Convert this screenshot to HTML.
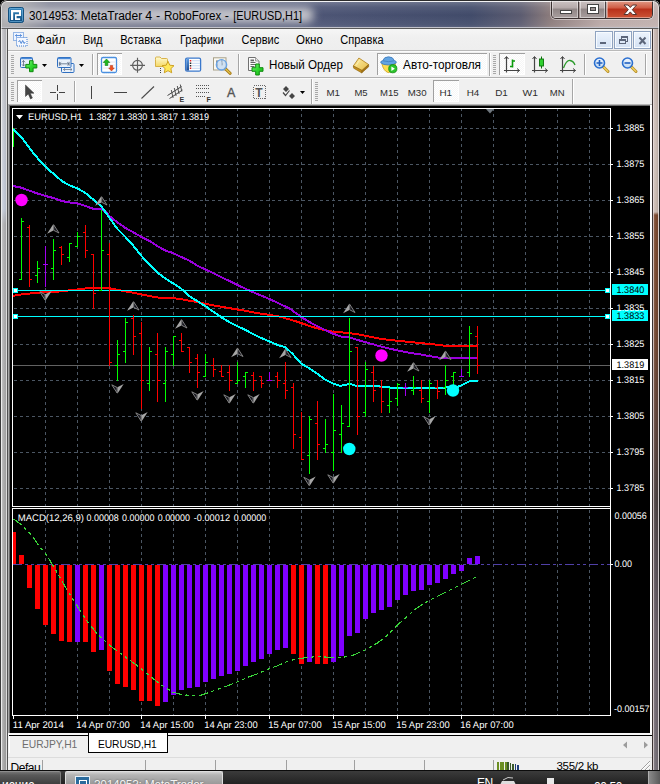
<!DOCTYPE html>
<html><head><meta charset="utf-8"><title>MetaTrader 4</title>
<style>
*{box-sizing:border-box;margin:0;padding:0}
html,body{width:660px;height:784px;overflow:hidden;background:#000;font-family:"Liberation Sans",sans-serif;}
.abs{position:absolute}
#frame{position:absolute;left:0;top:0;width:660px;height:771px;background:#c6c6c6;border-radius:7px 7px 0 0;overflow:hidden}
#frame:after{content:'';position:absolute;left:0;top:0;width:660px;height:40px;border-radius:7px 7px 0 0;box-shadow:inset 0 0 0 1px #2c2c2c,inset 0 0 0 2px rgba(255,255,255,.55);clip-path:inset(0 0 11px 0);pointer-events:none}
#title{position:absolute;left:28.500px;top:7px;font-size:12px;color:#000;white-space:nowrap;letter-spacing:-0.28px;text-shadow:0 0 5px #fff,0 0 8px #fff}
#client{position:absolute;left:8px;top:29px;width:644px;height:742px;background:#f0f0f0}
#menubar{position:absolute;left:0;top:0;width:644px;height:21px;background:linear-gradient(#f6f6f6,#f0f0f0 8px,#eeeeee)}
  .mi{position:absolute;top:5px;font-size:11px;letter-spacing:-0.1px;color:#000;white-space:nowrap}
.tb{position:absolute;left:0;width:644px;background:#f0f0f0}
.sep{position:absolute;width:1px;background:#a0a0a0}
.tf{position:absolute;top:7px;font-size:10px;color:#222;white-space:nowrap}
.chart{position:absolute;left:0;top:75px}
#tabs{position:absolute;left:0;top:704px;width:644px;height:24px;background:#f0f0f0}
#status{position:absolute;left:0;top:728px;width:644px;height:14px;background:#f0f0f0}
#taskbar{position:absolute;left:0;top:770px;width:660px;height:14px;background:linear-gradient(#3d3d3d,#222)}
</style></head><body>
<div id="frame">
<div class="abs" style="left:1px;top:1px;width:658px;height:28px;background:linear-gradient(90deg,#a6a6a8 0px,#9a9a9e 18px,#6c7086 48px,#4e5676 300px,#475070 380px,#414b6a 470px,#5c5c70 520px,#8c7c7c 550px,#b9a8a6 600px,#c0b0ae 658px)"></div>
<div class="abs" style="left:1px;top:1px;width:658px;height:28px;background:linear-gradient(180deg,rgba(255,255,255,.85) 0px,rgba(255,255,255,.85) 1px,rgba(255,255,255,.22) 1px,rgba(255,255,255,.08) 6px,rgba(255,255,255,0) 14px,rgba(255,255,255,.06) 24px,rgba(255,255,255,.12) 26px,#c2c2ca 26px,#c2c2ca 27px,#5e5e5e 27px,#5e5e5e 28px)"></div>
<div class="abs" style="left:2px;top:7px;width:312px;height:16px;border-radius:8px;background:rgba(200,200,206,.95);filter:blur(4px)"></div>
<!-- side strips -->
<div class="abs" style="left:0;top:29px;width:8px;height:742px;background:linear-gradient(180deg,#bcbcc0 0px,#c4c8d0 100px,#c2c9d6 180px,#b0b0b2 195px,#a9a9a9 470px,#a4a4a4 742px)"></div><div class="abs" style="left:0;top:29px;width:8px;height:742px;background:linear-gradient(90deg,#3c3c3c 0,#3c3c3c 1px,#ececec 1px,#ececec 2px,rgba(255,255,255,.25) 2px,rgba(255,255,255,0) 4px,rgba(0,0,0,.06) 6px,#dcdcdc 6px,#dcdcdc 7px,#505050 7px,#505050 8px)"></div>

<div class="abs" style="left:652px;top:29px;width:8px;height:742px;background:linear-gradient(180deg,#c6b6b0 0px,#cdbfb8 120px,#c9b9b0 183px,#7c4a30 186px,#744832 300px,#5e443c 400px,#4c4242 470px,#5a5258 540px,#6a6068 600px,#777078 742px)"></div>
<div class="abs" style="left:652px;top:29px;width:8px;height:742px;background:linear-gradient(90deg,#3a3232 0,#3a3232 1px,rgba(235,225,225,.75) 1px,rgba(235,225,225,.75) 2px,rgba(255,255,255,.1) 2px,rgba(255,255,255,0) 4px,rgba(0,0,0,.1) 6px,rgba(230,225,225,.85) 6px,rgba(230,225,225,.85) 7px,#222 7px,#222 8px)"></div>
<!-- client border -->
<div class="abs" style="left:7px;top:28px;width:646px;height:1px;background:#5a5a5a"></div>
<!-- app icon -->
<svg class="abs" style="left:8px;top:7px" width="16" height="16" viewBox="0 0 16 16"><defs><linearGradient id="ai" x1="0" y1="0" x2="0" y2="1"><stop offset="0" stop-color="#3b8cc2"/><stop offset="1" stop-color="#0f4a7c"/></linearGradient></defs><rect x=".5" y=".5" width="15" height="15" rx="1.800" fill="url(#ai)" stroke="#14507e"/><rect x="1.500" y="1.500" width="13" height="13" rx="1" fill="none" stroke="#6fb0dc" stroke-opacity=".7"/><path d="M3 3h10v6h-4.400v2.200h3.500v1.800H7V7.200h4V5.200H5.200v7.800H3z" fill="#fff"/></svg>
<!-- window buttons -->
<div class="abs" style="left:551px;top:0;width:102px;height:19px;border:1px solid #3a3030;border-top:none;border-radius:0 0 5px 5px;overflow:hidden;box-shadow:0 0 0 1px rgba(255,255,255,.45)">
<div class="abs" style="left:0;top:0;width:27px;height:18px;background:linear-gradient(#cfc6c6,#b4a9a9 45%,#8f8585 50%,#a89e9e);border-right:1px solid #4a4040;box-shadow:inset 0 0 0 1px rgba(255,255,255,.45)"></div>
<div class="abs" style="left:28px;top:0;width:26px;height:18px;background:linear-gradient(#cfc6c6,#b4a9a9 45%,#8f8585 50%,#a89e9e);border-right:1px solid #4a4040;box-shadow:inset 0 0 0 1px rgba(255,255,255,.45)"></div>
<div class="abs" style="left:55px;top:0;width:46px;height:18px;background:linear-gradient(#e3a390,#cf5a42 45%,#b8301a 50%,#cc5436);box-shadow:inset 0 0 0 1px rgba(255,255,255,.4)"></div>
<svg class="abs" style="left:0;top:0" width="100" height="18" viewBox="0 0 100 18"><rect x="8.500" y="10.500" width="11" height="3" fill="#fff" stroke="#454545"/><rect x="35.500" y="4.500" width="11" height="9" fill="#fff" stroke="#454545"/><rect x="38.500" y="7.500" width="5" height="3" fill="#9a9090" stroke="#454545"/><path d="M72 5h4l2.300 2.500 2.300-2.500h4l-4.300 4.700 4.300 4.800h-4l-2.300-2.600-2.300 2.600h-4l4.300-4.800z" fill="#fff" stroke="#54342e" stroke-width="1" stroke-linejoin="round"/></svg>
</div>

</div>
<div id="client">
<div id="menubar">
<svg class="abs" style="left:4px;top:2px" width="17" height="17" viewBox="12 31 17 17"><rect x="13.500" y="32.500" width="10" height="8" fill="#eef4ff" stroke="#3a78d0" stroke-dasharray="1 1"/><path d="M15.500 35.500h6M15.500 35.500l1.300-1.200M15.500 35.500l1.300 1.200M21.500 35.500l-1.300-1.200M21.500 35.500l-1.300 1.200" stroke="#3a78d0" stroke-width=".8" fill="none"/><rect x="16.500" y="37.500" width="10.500" height="8.500" fill="#f4f8ff" stroke="#3a78d0" stroke-dasharray="1 1"/><path d="M18.500 42l1.200-1.500 1.500 3 1.500-3 1.500 3 1-1.500" stroke="#3a78d0" stroke-width=".9" fill="none"/></svg>

<svg class="abs mdibtn" style="left:586px;top:1px" width="58" height="20" viewBox="594 30 58 20"><defs><linearGradient id="mb" x1="0" y1="0" x2="0" y2="1"><stop offset="0" stop-color="#edf4fd"/><stop offset="1" stop-color="#d3e1f3"/></linearGradient></defs>
<g shape-rendering="crispEdges"><rect x="595.500" y="31.500" width="17" height="17" fill="url(#mb)" stroke="#8fa3c0"/><rect x="614.500" y="31.500" width="17" height="17" fill="url(#mb)" stroke="#8fa3c0"/><rect x="633.500" y="31.500" width="17" height="17" fill="url(#mb)" stroke="#8fa3c0"/>
<rect x="596.500" y="32.500" width="15" height="15" fill="none" stroke="#f7fbff"/><rect x="615.500" y="32.500" width="15" height="15" fill="none" stroke="#f7fbff"/><rect x="634.500" y="32.500" width="15" height="15" fill="none" stroke="#f7fbff"/>
<rect x="600" y="42" width="6" height="2" fill="#5c667a"/>
<path d="M621.500 39V36.500H627.500V41.500H625.500" fill="none" stroke="#5c667a"/><path d="M621 37.500h7" stroke="#5c667a"/>
<rect x="619.500" y="39.500" width="6" height="4" fill="none" stroke="#5c667a"/><path d="M619 40.500h7" stroke="#5c667a"/></g>
<path d="M639.500 37.500l6 6.500M645.500 37.500l-6 6.500" stroke="#5c667a" stroke-width="2"/></svg>
</div>
<svg class="abs" style="left:0;top:21px" width="644" height="54" viewBox="8 50 644 54" font-family="Liberation Sans, sans-serif">
<defs>
<pattern id="dith" width="2" height="2" patternUnits="userSpaceOnUse"><rect width="2" height="2" fill="#f6f6f6"/><rect width="1" height="1" fill="#fff"/><rect x="1" y="1" width="1" height="1" fill="#fff"/></pattern>
<linearGradient id="gold" x1="0" y1="0" x2="1" y2="1"><stop offset="0" stop-color="#fff0a8"/><stop offset="1" stop-color="#e6bc48"/></linearGradient>
<linearGradient id="fold" x1="0" y1="0" x2="0" y2="1"><stop offset="0" stop-color="#fffbd4"/><stop offset="1" stop-color="#f5d864"/></linearGradient><linearGradient id="dwl" x1="0" y1="0" x2="0" y2="1"><stop offset="0" stop-color="#5a9ae0"/><stop offset="1" stop-color="#1c4c94"/></linearGradient><linearGradient id="plg" x1="0" y1="0" x2="1" y2="1"><stop offset="0" stop-color="#7cf67c"/><stop offset=".5" stop-color="#2fd82f"/><stop offset="1" stop-color="#16b016"/></linearGradient><linearGradient id="lens" x1="0" y1="0" x2="0" y2="1"><stop offset="0" stop-color="#f2f8ff" stop-opacity=".85"/><stop offset="1" stop-color="#b4d4f4" stop-opacity=".8"/></linearGradient>
<g id="grip" shape-rendering="crispEdges"><path d="M0 0.5h3M0 2.5h3M0 4.5h3M0 6.5h3M0 8.5h3M0 10.5h3M0 12.5h3M0 14.5h3M0 16.5h3M0 18.5h3" stroke="#a8a8a8" stroke-width="1"/></g>
<g id="plus"><path d="M-1.8 -5.5h3.6v3.7h3.7v3.6h-3.7v3.7h-3.6v-3.7h-3.7v-3.6h3.7z" fill="url(#plg)" stroke="#0f8a0f" stroke-width="1" stroke-linejoin="round"/></g>
<g id="dd"><path d="M0 0h5l-2.5 3z" fill="#000"/></g>
<g id="mag"><line x1="3.5" y1="3.5" x2="8.5" y2="8.5" stroke="#b8902a" stroke-width="3" stroke-linecap="round"/><line x1="4" y1="4" x2="8.3" y2="8.3" stroke="#f0d060" stroke-width="1.4" stroke-linecap="round"/><circle r="5" fill="url(#lens)" stroke="#2a6fd0" stroke-width="1.6"/></g>
</defs>
<rect x="8" y="50" width="644" height="56" fill="#f0f0f0"/>
<g shape-rendering="crispEdges">
<path d="M8 50.5H652" stroke="#b9b9b9"/><path d="M8 51.5H652" stroke="#fbfbfb"/>
<path d="M8 77.5H652" stroke="#b0b0b0"/><path d="M8 78.5H652" stroke="#fbfbfb"/>
<path d="M8 104.5H652" stroke="#fff"/><path d="M8 105.5H652" stroke="#696969"/>
<!-- separators -->
<g stroke="#a6a6a6"><path d="M92.5 54V75M238.5 54V75M489.5 53V76M584.5 54V75M645.5 54V75M74.5 81V102M311.5 79V104M572.5 79V104"/></g>
<g stroke="#fff"><path d="M93.5 54V75M239.5 54V75M490.5 53V76M585.5 54V75M646.5 54V75M75.5 81V102M312.5 79V104M573.5 79V104"/></g>
<!-- pressed buttons -->
<g>
<rect x="97" y="53" width="25" height="22" fill="url(#dith)"/><path d="M97.5 75V53.5H122" stroke="#a0a0a0" fill="none"/><path d="M121.5 54V74.5H98" stroke="#fff" fill="none"/>
<rect x="377" y="53" width="110" height="22" fill="url(#dith)"/><path d="M377.5 75V53.5H487" stroke="#a0a0a0" fill="none"/><path d="M486.5 54V74.5H378" stroke="#fff" fill="none"/>
<rect x="499" y="53" width="26" height="22" fill="url(#dith)"/><path d="M499.5 75V53.5H525" stroke="#a0a0a0" fill="none"/><path d="M524.5 54V74.5H500" stroke="#fff" fill="none"/>
<rect x="17" y="80" width="25" height="22" fill="url(#dith)"/><path d="M17.5 102V80.5H42" stroke="#a0a0a0" fill="none"/><path d="M41.5 81V101.5H18" stroke="#fff" fill="none"/>
<rect x="433" y="80" width="26" height="22" fill="url(#dith)"/><path d="M433.5 102V80.5H459" stroke="#a0a0a0" fill="none"/><path d="M458.5 81V101.5H434" stroke="#fff" fill="none"/>
</g>
</g>
<use href="#grip" x="11" y="55"/><use href="#grip" x="493" y="55"/><use href="#grip" x="11" y="82"/><use href="#grip" x="315" y="82"/>
<!-- icon: new chart -->
<g>
<rect x="20.500" y="57.500" width="12" height="10" rx="1" fill="#e9f1fb" stroke="#2f6fc0"/><path d="M21 58.500h11" stroke="#4a8ad8" stroke-width="1.400"/>
<path d="M23.500 60.500v5.500M22 62.300l1.500-1.800L25 62.300M22 64.300l1.500 1.800L25 64.300" stroke="#5a6a80" stroke-width=".8" fill="none"/>
<use href="#plus" x="31.300" y="66.200"/>
<use href="#dd" x="42" y="64"/>
</g>
<!-- icon: profiles / two windows -->
<g>
<rect x="61.500" y="63.500" width="12.500" height="9" rx="1" fill="#e9f1fb" stroke="#2f6fc0"/>
<path d="M63.500 69.500h8.500M63.500 69.500l1.600-1.400M63.500 69.500l1.600 1.400M72 69.500l-1.600-1.400M72 69.500l-1.600 1.400" stroke="#6a7a90" stroke-width=".8" fill="none"/>
<rect x="57.500" y="57.500" width="13.500" height="10" rx="1" fill="#e9f1fb" stroke="#2f6fc0"/><path d="M58 58.500h12.500" stroke="#4a8ad8" stroke-width="1.400"/>
<path d="M59.500 63.800h9.500M59.500 63.800l1.700-1.500M59.500 63.800l1.700 1.500M69 63.800l-1.700-1.500M69 63.800l-1.700 1.500M59.400 61.800v4M69.100 61.800v4" stroke="#5a6a80" stroke-width=".8" fill="none"/>
<use href="#dd" x="79" y="64"/>
</g>
<!-- icon: market watch (arrows) -->
<g>
<rect x="101.5" y="57.5" width="15" height="15" rx="1.500" fill="#fff" stroke="#4a90e0" stroke-width="1.3"/>
<path d="M103 62h12M103 65h12M103 68h12" stroke="#dde" stroke-width=".8"/>
<path d="M106.5 59l3.300 3.500h-2v3h-2.600v-3h-2z" fill="#1fb81f" stroke="#0a800a" stroke-width=".6"/>
<path d="M111.500 71l-2.800-3h1.600v-2.500h2.400v2.500h1.600z" fill="#f05020" stroke="#b03010" stroke-width=".5"/>
</g>
<!-- icon: crosshair target -->
<g stroke="#5e5e5e" fill="none" stroke-width="1.150"><circle cx="137.500" cy="65.300" r="4.900"/><path d="M137.500 57.800v15M130.200 65.300h14.800"/></g>
<!-- icon: folder + star -->
<g>
<path d="M155.500 59.500v-1.500q0-1 1-1h3.500l1.500 1.500h5q1 0 1 1v7h-12z" fill="url(#fold)" stroke="#d4ac3c" stroke-width=".9"/>
<path d="M160.500 68v1M160.500 70v1M160.500 72v1" stroke="#444" stroke-width="1"/>
<path d="M168 61.300l1.800 3.900 4.200.5-3.100 2.900.8 4.200-3.700-2.100-3.700 2.100.8-4.200-3.100-2.900 4.200-.5z" fill="#ffe85a" stroke="#c89a18" stroke-width=".9" stroke-linejoin="round"/>
</g>
<!-- icon: data window -->
<g>
<rect x="185.600" y="58.200" width="15" height="13" rx="1.500" fill="#fff" stroke="#3a78cc" stroke-width="1.300"/>
<rect x="186.300" y="58.900" width="2.700" height="11.600" fill="url(#dwl)"/>
<path d="M192 60.800h8M192 63.300h8M192 65.800h8M192 68.300h8" stroke="#bdd2f0" stroke-width=".9"/>
<path d="M189.800 60h1.500v1.500h-1.500zM189.800 67.500h1.500v1.500h-1.500z" fill="#e02020"/><path d="M189.800 62.500h1.500v1.500h-1.500zM189.800 65h1.500v1.500h-1.500z" fill="#222"/>
</g>
<!-- icon: chart + magnifier -->
<g>
<rect x="213.500" y="57.800" width="12.500" height="12.200" fill="#fbf9f2" stroke="#a8a088"/>
<path d="M217 60v7M216 62h1M217 65h1M222 59.500v6M221 61h1M222 64h1" stroke="#555" stroke-width=".8"/>
<g transform="translate(221.500,64.800)"><line x1="4" y1="4" x2="8.700" y2="8.500" stroke="#a87c18" stroke-width="3" stroke-linecap="round"/><line x1="4.300" y1="4.300" x2="8.500" y2="8.300" stroke="#e8c850" stroke-width="1.300" stroke-linecap="round"/><circle r="5.200" fill="#b4d2f2" fill-opacity=".62" stroke="#6aa4e6" stroke-width="1.300"/></g>
</g>
<!-- icon: new order -->
<g>
<path d="M248.500 57.500h7l3.500 3.500v9.500h-10.500z" fill="#fafafa" stroke="#707070"/><rect x="250.500" y="59.500" width="3.500" height="1.800" fill="#666"/><path d="M255.500 57.500v3.500h3.500" fill="#e4e4e4" stroke="#8a8a8a" stroke-width=".8"/>
<path d="M250.500 62.500h5M250.500 64.500h6M250.500 66.500h4" stroke="#555" stroke-width=".9"/>
<use href="#plus" x="257.500" y="69.500"/>
<text x="269" y="69.300" font-size="12px" fill="#000" textLength="74" lengthAdjust="spacingAndGlyphs">Новый Ордер</text>
</g>
<!-- icon: gold book -->
<g>
<path d="M353.300 66l5.600-8 9.700 6.500-6.600 6z" fill="url(#gold)" stroke="#b07c14" stroke-width=".8" stroke-linejoin="round"/>
<path d="M353.300 66l.4 2.200 8 4.700.3-2.400z" fill="#c8901c" stroke="#8a6410" stroke-width=".6" stroke-linejoin="round"/><path d="M361.700 72.900l7-6.200-.1-2.200-6.600 6z" fill="#a87414" stroke="#8a6410" stroke-width=".6" stroke-linejoin="round"/>
<path d="M356 65.500l3.500-5" stroke="#fff6c0" stroke-width="1" stroke-opacity=".7"/>
</g>
<!-- icon: autotrading -->
<g>
<path d="M381.800 63.500h13.800l-1.600 5.500q-2.500 4-6 3.500q-4.500-1.500-6.200-9z" fill="#ffdc50" stroke="#c8a020" stroke-width=".8" stroke-linejoin="round"/>
<path d="M380.800 62.800q-.8-1.300 2-2.200q1.200-3.800 5.700-3.800t5.700 3.600q2.800 1 2 2.400q-2 2.200-7.700 2.200t-7.700-2.200z" fill="#62a4e2" stroke="#3a78bc" stroke-width=".8"/>
<path d="M383 60.800q5.500 1.800 11.200 0" stroke="#3a78bc" stroke-width=".7" fill="none"/>
<circle cx="392.800" cy="68.700" r="4.100" fill="#2cc42c" stroke="#0f8a0f" stroke-width=".8"/><path d="M391.400 66.400l3.500 2.300-3.500 2.300z" fill="#fff"/>
<text x="403" y="69.300" font-size="12px" fill="#000" textLength="78" lengthAdjust="spacingAndGlyphs">Авто-торговля</text>
</g>
<!-- chart-type icons -->
<g fill="none">
<path d="M506.500 57v15.500M504 70.500h15.500" stroke="#444" stroke-width="1.200"/><path d="M504.500 59l2-2.500 2 2.500M517 68.500l2.500 2-2.500 2" stroke="#444" stroke-width="1"/>
<path d="M512.500 59.500v8M510 66.500h2.500M512.500 61h2.500" stroke="#0a9a0a" stroke-width="1.600"/>
<path d="M534.500 57v15.500M532 70.500h15.500" stroke="#444" stroke-width="1.200"/><path d="M532.500 59l2-2.500 2 2.500M545 68.500l2.500 2-2.500 2" stroke="#444" stroke-width="1"/>
<path d="M541.500 56.500v12" stroke="#0a700a" stroke-width="1"/><rect x="539.500" y="59" width="4" height="7" fill="#30d030" stroke="#0a700a" stroke-width=".9"/>
<path d="M562.500 57v15.500M560 70.500h15.500" stroke="#444" stroke-width="1.200"/><path d="M560.500 59l2-2.500 2 2.500M573 68.500l2.500 2-2.500 2" stroke="#444" stroke-width="1"/>
<path d="M563.500 68q3-8 6.500-7.500t5 4.500" stroke="#2a9a2a" stroke-width="1.300"/>
</g>
<!-- zoom icons -->
<g transform="translate(599.500,63)"><use href="#mag"/><path d="M-3 0h6M0 -3v6" stroke="#2060c0" stroke-width="1.600"/></g>
<g transform="translate(627.500,63)"><use href="#mag"/><path d="M-3 0h6" stroke="#2060c0" stroke-width="1.600"/></g>
<!-- toolbar 2 -->
<path d="M25.500 85v11.500l2.800-2.600 2.200 5 1.900-.9-2.200-4.800h3.800z" fill="#444" stroke="#333" stroke-width=".5" stroke-linejoin="round"/>
<g stroke="#444" stroke-width="1.200" shape-rendering="crispEdges"><path d="M57.500 85v6M57.500 94v6M50 92.500h6M59 92.500h6"/><path d="M91.500 86v13"/><path d="M114 92.500h13"/></g>
<path d="M141.500 98.500l12.500-12" stroke="#4a4a4a" stroke-width="1.050"/>
<!-- channel E -->
<g stroke="#444" stroke-width="1" fill="none"><path d="M167.500 95.500l14-9M169.500 98.500l13-8.500"/><path d="M171.300 90l1.800 8M174.300 88l1.800 8M177.300 86l1.800 8M180.300 84.500l1.500 7" stroke-width=".9"/></g>
<text x="179.500" y="101.500" font-size="7px" font-weight="bold" fill="#333">E</text>
<!-- fibo F -->
<g stroke="#555" stroke-width="1" stroke-dasharray="1 1" shape-rendering="crispEdges"><path d="M196 85.500h14M196 88.500h14M196 92.500h14M196 96.500h10"/></g>
<text x="206.500" y="101.500" font-size="7px" font-weight="bold" fill="#333">F</text>
<text x="227" y="96.800" font-size="12.500px" fill="#555" stroke="#555" stroke-width=".35">A</text>
<rect x="253.500" y="85.500" width="12" height="13" fill="none" stroke="#666" stroke-dasharray="1 1" shape-rendering="crispEdges"/>
<text x="255.300" y="97" font-size="12px" font-weight="bold" fill="#555">T</text>
<g fill="#444"><path d="M283 89l3-3 3 3-3 3zM289 96l3-3 3 3-3 3z"/><path d="M283 92.500l2.500 3 4-5" stroke="#444" stroke-width="1.200" fill="none"/></g>
<use href="#dd" x="300" y="91"/>
<g font-size="9.200px" fill="#2e2e2e"><text x="326.4" y="95.600" textLength="13.5" lengthAdjust="spacingAndGlyphs">M1</text><text x="354.4" y="95.600" textLength="13.2" lengthAdjust="spacingAndGlyphs">M5</text><text x="380.1" y="95.600" textLength="18.5" lengthAdjust="spacingAndGlyphs">M15</text><text x="407.8" y="95.600" textLength="18.8" lengthAdjust="spacingAndGlyphs">M30</text><text x="439.4" y="95.600" textLength="12.7" lengthAdjust="spacingAndGlyphs">H1</text><text x="466.7" y="95.600" textLength="12.6" lengthAdjust="spacingAndGlyphs">H4</text><text x="495.2" y="95.600" textLength="12.7" lengthAdjust="spacingAndGlyphs">D1</text><text x="522.4" y="95.600" textLength="15.5" lengthAdjust="spacingAndGlyphs">W1</text><text x="549.8" y="95.600" textLength="14.8" lengthAdjust="spacingAndGlyphs">MN</text></g>
</svg>

<svg class="chart" width="644" height="629" viewBox="8 104 644 629" shape-rendering="crispEdges">
<rect x="8" y="104" width="644" height="629" fill="#000"/>
<rect x="8" y="104" width="644" height="1" fill="#b8b8b8"/><rect x="8" y="105" width="644" height="1" fill="#6c6c6c"/>
<rect x="8" y="104" width="1" height="629" fill="#a8a8a8"/><rect x="9" y="105" width="1" height="628" fill="#6c6c6c"/>
<rect x="650" y="105" width="2" height="628" fill="#fff"/>
<g stroke="#4b5663" stroke-width="1" stroke-dasharray="3 3" fill="none">
<path d="M45.5 108V506"/>
<path d="M45.5 510V715"/>
<path d="M77.5 108V506"/>
<path d="M77.5 510V715"/>
<path d="M109.5 108V506"/>
<path d="M109.5 510V715"/>
<path d="M141.5 108V506"/>
<path d="M141.5 510V715"/>
<path d="M173.5 108V506"/>
<path d="M173.5 510V715"/>
<path d="M205.5 108V506"/>
<path d="M205.5 510V715"/>
<path d="M237.5 108V506"/>
<path d="M237.5 510V715"/>
<path d="M269.5 108V506"/>
<path d="M269.5 510V715"/>
<path d="M301.5 108V506"/>
<path d="M301.5 510V715"/>
<path d="M333.5 108V506"/>
<path d="M333.5 510V715"/>
<path d="M365.5 108V506"/>
<path d="M365.5 510V715"/>
<path d="M397.5 108V506"/>
<path d="M397.5 510V715"/>
<path d="M429.5 108V506"/>
<path d="M429.5 510V715"/>
<path d="M461.5 108V506"/>
<path d="M461.5 510V715"/>
<path d="M493.5 108V506"/>
<path d="M493.5 510V715"/>
<path d="M525.5 108V506"/>
<path d="M525.5 510V715"/>
<path d="M557.5 108V506"/>
<path d="M557.5 510V715"/>
<path d="M589.5 108V506"/>
<path d="M589.5 510V715"/>
<path d="M14 128.5H610"/>
<path d="M14 164.5H610"/>
<path d="M14 200.5H610"/>
<path d="M14 236.5H610"/>
<path d="M14 272.5H610"/>
<path d="M14 308.5H610"/>
<path d="M14 344.5H610"/>
<path d="M14 380.5H610"/>
<path d="M14 416.5H610"/>
<path d="M14 452.5H610"/>
<path d="M14 488.5H610"/>
</g>
<path d="M13 365.5H610" stroke="#626262" stroke-width="1"/>
<g stroke="#fff" stroke-width="1" fill="none">
<path d="M12.5 108V507M12 108.5H611M610.5 108V716M12 506.5H611"/>
<path d="M12 508.5H611M12.5 508V716M12 715.5H611"/>
</g>
<g stroke="#fff" stroke-width="1">
<path d="M610 128.5H613"/>
<path d="M610 164.5H613"/>
<path d="M610 200.5H613"/>
<path d="M610 236.5H613"/>
<path d="M610 272.5H613"/>
<path d="M610 308.5H613"/>
<path d="M610 344.5H613"/>
<path d="M610 380.5H613"/>
<path d="M610 416.5H613"/>
<path d="M610 452.5H613"/>
<path d="M610 488.5H613"/>
<path d="M610 564.5H613"/>
<path d="M13.5 716V719"/>
<path d="M77.5 716V719"/>
<path d="M141.5 716V719"/>
<path d="M205.5 716V719"/>
<path d="M269.5 716V719"/>
<path d="M333.5 716V719"/>
<path d="M397.5 716V719"/>
<path d="M461.5 716V719"/>
</g>
<path d="M13.5 128V147" stroke="#00ff00" stroke-width="1"/>
<path d="M486 109h8l-4 4.500z" fill="#70787f" shape-rendering="auto"/>
<g fill="none" stroke-width="2" shape-rendering="crispEdges" stroke-linejoin="round">
<polyline points="13,295.75 23,294.25 33,293.25 45.5,292 58,291.6 70.5,290.2 83,288.8 93,287.5 108,288 118,290 128,291.75 138,293.75 148,295.75 158,297.5 173.75,298.25 181.25,299.25 189.5,300.75 197.5,302 205.5,303.75 213.75,305.5 221.75,306.75 230,308.25 237.5,309.5 245.5,310.75 253.75,312.5 261.75,313.75 270,315 278,316.25 290,319.5 301.25,323 312.5,327 322.5,329.5 333.25,331.75 342.5,332.5 349.5,333.25 357.5,334.25 365,335.75 380,338.75 390,340 405,341.5 420,343 435,344.5 446.5,346 477.5,346" stroke="#ff0000"/>
<polyline points="13,186 20.5,187.5 29,190.5 37.5,193.5 45.5,196 53.5,198 61.75,201 69.75,202.5 77.5,203.5 85.5,206 93.75,209 101.75,209 105.5,211.75 109.5,216 117.5,222.5 125.5,228 133.75,232.6 141.75,237.2 150,241.3 157.5,246.2 165.75,250.75 173.75,253.25 181.25,257 189.5,260.75 197.5,265.75 205.5,269.5 213.75,273.25 221.75,277.5 230,281.25 237.5,285 245.5,288.75 253.75,292.5 261.75,295.75 270,299.25 278,303 290,308.75 301.25,317 312.5,323.75 322.5,328.75 333.25,333.75 342.5,337 349.5,337.5 357.5,340 365,342 380,346.25 390,348.75 405,352 420,354.4 435,357 442,358.2 477.5,358.2" stroke="#9a00dc"/>
<polyline points="13.3,128.8 18,134.3 23.6,140 28,146 32.7,152.2 39,159.8 45.5,166.8 50.5,171.3 55.5,175.4 61.75,181 69.75,185.5 77.5,188.5 85.5,193 93.75,200 101.75,206.75 109.5,218 117.5,229 125,236.5 133.75,246.25 141.75,256.25 150,265 157.5,272.5 165.75,278.75 173.75,283.75 181.25,288.75 189.5,296.25 197.5,301.25 205.5,306.25 213.75,312 221.75,317.5 230,322.5 237.5,326.25 245.5,330 253.75,334.5 261.75,338.25 270,341.75 278,345.2 285,347 292.5,353.75 301.25,363.75 310,368.75 317.5,373.75 325,379.5 333.25,383.75 340,385.75 345.5,385 349.5,383.75 353.75,385 357.5,386.25 365,386.25 380,386.5 390,387.5 405,387.5 420,387.5 445,387.5 457,387.3 463.4,384.3 469.5,381.2 478.5,381" stroke="#00ffff"/>
</g>
<path d="M13 290.5H610M13 316.5H610" stroke="#00ffff" stroke-width="1"/>
<path d="M21.5 218V280M19 279.5H21M22 221.5H24" stroke="#00ff00" stroke-width="1" fill="none"/>
<path d="M29.5 225V287M27 227.5H29M30 279.5H32" stroke="#ff0000" stroke-width="1" fill="none"/>
<path d="M37.5 261V283M35 275.5H37M38 268.5H40" stroke="#00ff00" stroke-width="1" fill="none"/>
<path d="M45.5 246V287M43 264.5H45M46 264.5H48" stroke="#a000f0" stroke-width="1" fill="none"/>
<path d="M53.5 239V280M51 268.5H53M54 250.5H56" stroke="#00ff00" stroke-width="1" fill="none"/>
<path d="M61.5 246V265M59 247.5H61M62 254.5H64" stroke="#ff0000" stroke-width="1" fill="none"/>
<path d="M69.5 243V262M67 257.5H69M70 243.5H72" stroke="#00ff00" stroke-width="1" fill="none"/>
<path d="M77.5 232V247M75 246.5H77M78 236.5H80" stroke="#00ff00" stroke-width="1" fill="none"/>
<path d="M85.5 225V258M83 232.5H85M86 250.5H88" stroke="#ff0000" stroke-width="1" fill="none"/>
<path d="M93.5 254V309M91 254.5H93M94 293.5H96" stroke="#ff0000" stroke-width="1" fill="none"/>
<path d="M101.5 210V291M99 290.5H101M102 250.5H104" stroke="#00ff00" stroke-width="1" fill="none"/>
<path d="M109.5 243V366M107 254.5H109M110 362.5H112" stroke="#ff0000" stroke-width="1" fill="none"/>
<path d="M117.5 340V381M115 365.5H117M118 354.5H120" stroke="#00ff00" stroke-width="1" fill="none"/>
<path d="M125.5 318V363M123 351.5H125M126 322.5H128" stroke="#00ff00" stroke-width="1" fill="none"/>
<path d="M133.5 315V355M131 318.5H133M134 336.5H136" stroke="#ff0000" stroke-width="1" fill="none"/>
<path d="M141.5 322V409M139 333.5H141M142 380.5H144" stroke="#ff0000" stroke-width="1" fill="none"/>
<path d="M149.5 347V391M147 383.5H149M150 351.5H152" stroke="#00ff00" stroke-width="1" fill="none"/>
<path d="M157.5 333V402M155 354.5H157M158 380.5H160" stroke="#ff0000" stroke-width="1" fill="none"/>
<path d="M165.5 347V402M163 383.5H165M166 351.5H168" stroke="#00ff00" stroke-width="1" fill="none"/>
<path d="M173.5 336V366M171 354.5H173M174 336.5H176" stroke="#00ff00" stroke-width="1" fill="none"/>
<path d="M181.5 333V352M179 340.5H181M182 351.5H184" stroke="#ff0000" stroke-width="1" fill="none"/>
<path d="M189.5 347V373M187 347.5H189M190 362.5H192" stroke="#ff0000" stroke-width="1" fill="none"/>
<path d="M197.5 354V388M195 358.5H197M198 372.5H200" stroke="#ff0000" stroke-width="1" fill="none"/>
<path d="M205.5 354V377M203 376.5H205M206 362.5H208" stroke="#00ff00" stroke-width="1" fill="none"/>
<path d="M213.5 358V377M211 365.5H213M214 369.5H216" stroke="#ff0000" stroke-width="1" fill="none"/>
<path d="M221.5 365V377M219 371.5H221M222 376.5H224" stroke="#ff0000" stroke-width="1" fill="none"/>
<path d="M229.5 365V391M227 372.5H229M230 380.5H232" stroke="#ff0000" stroke-width="1" fill="none"/>
<path d="M237.5 362V384M235 383.5H237M238 380.5H240" stroke="#00ff00" stroke-width="1" fill="none"/>
<path d="M245.5 372V388M243 376.5H245M246 372.5H248" stroke="#00ff00" stroke-width="1" fill="none"/>
<path d="M253.5 372V391M251 375.5H253M254 380.5H256" stroke="#ff0000" stroke-width="1" fill="none"/>
<path d="M261.5 376V388M259 376.5H261M262 383.5H264" stroke="#ff0000" stroke-width="1" fill="none"/>
<path d="M269.5 372V381M267 380.5H269M270 380.5H272" stroke="#a000f0" stroke-width="1" fill="none"/>
<path d="M277.5 372V388M275 376.5H277M278 380.5H280" stroke="#ff0000" stroke-width="1" fill="none"/>
<path d="M285.5 362V399M283 383.5H285M286 390.5H288" stroke="#ff0000" stroke-width="1" fill="none"/>
<path d="M293.5 383V449M291 387.5H293M294 434.5H296" stroke="#ff0000" stroke-width="1" fill="none"/>
<path d="M301.5 412V460M299 437.5H301M302 459.5H304" stroke="#ff0000" stroke-width="1" fill="none"/>
<path d="M309.5 416V474M307 455.5H309M310 419.5H312" stroke="#00ff00" stroke-width="1" fill="none"/>
<path d="M317.5 401V460M315 423.5H317M318 444.5H320" stroke="#ff0000" stroke-width="1" fill="none"/>
<path d="M325.5 419V453M323 448.5H325M326 444.5H328" stroke="#00ff00" stroke-width="1" fill="none"/>
<path d="M333.5 394V471M331 452.5H333M334 430.5H336" stroke="#00ff00" stroke-width="1" fill="none"/>
<path d="M341.5 405V453M339 434.5H341M342 423.5H344" stroke="#00ff00" stroke-width="1" fill="none"/>
<path d="M349.5 318V427M347 426.5H349M350 351.5H352" stroke="#00ff00" stroke-width="1" fill="none"/>
<path d="M357.5 347V435M355 347.5H357M358 416.5H360" stroke="#ff0000" stroke-width="1" fill="none"/>
<path d="M365.5 362V417M363 412.5H365M366 369.5H368" stroke="#00ff00" stroke-width="1" fill="none"/>
<path d="M373.5 366V402M371 372.5H373M374 390.5H376" stroke="#ff0000" stroke-width="1" fill="none"/>
<path d="M381.5 380V413M379 387.5H381M382 401.5H384" stroke="#ff0000" stroke-width="1" fill="none"/>
<path d="M389.5 388V413M387 405.5H389M390 401.5H392" stroke="#00ff00" stroke-width="1" fill="none"/>
<path d="M397.5 383V406M395 398.5H397M398 384.5H400" stroke="#00ff00" stroke-width="1" fill="none"/>
<path d="M405.5 383V396M403 387.5H405M406 387.5H408" stroke="#a000f0" stroke-width="1" fill="none"/>
<path d="M413.5 376V395M411 390.5H413M414 387.5H416" stroke="#00ff00" stroke-width="1" fill="none"/>
<path d="M421.5 380V403M419 390.5H421M422 398.5H424" stroke="#ff0000" stroke-width="1" fill="none"/>
<path d="M429.5 380V413M427 401.5H429M430 383.5H432" stroke="#00ff00" stroke-width="1" fill="none"/>
<path d="M437.5 380V399M435 387.5H437M438 391.5H440" stroke="#ff0000" stroke-width="1" fill="none"/>
<path d="M445.5 365V395M443 387.5H445M446 380.5H448" stroke="#00ff00" stroke-width="1" fill="none"/>
<path d="M453.5 372V385M451 376.5H453M454 372.5H456" stroke="#00ff00" stroke-width="1" fill="none"/>
<path d="M461.5 369V377M459 376.5H461M462 376.5H464" stroke="#a000f0" stroke-width="1" fill="none"/>
<path d="M469.5 326V377M467 372.5H469M470 333.5H472" stroke="#00ff00" stroke-width="1" fill="none"/>
<path d="M477.5 326V374M475 336.5H477M478 365.5H480" stroke="#ff0000" stroke-width="1" fill="none"/>
<g shape-rendering="auto">
<path d="M101.4 196L95.10000000000001 205.8L101.4 202.6Z" fill="#a6a6a6"/><path d="M101.7 196.8L107.0 205L101.7 202.3Z" fill="#14141c" stroke="#8c8c8c" stroke-width="0.9"/>
<path d="M53.4 224L47.1 233.8L53.4 230.6Z" fill="#a6a6a6"/><path d="M53.699999999999996 224.8L59.0 233L53.699999999999996 230.3Z" fill="#14141c" stroke="#8c8c8c" stroke-width="0.9"/>
<path d="M45.4 300.8L51.699999999999996 291L45.4 294.2Z" fill="#a6a6a6"/><path d="M45.1 300L39.8 291.8L45.1 294.5Z" fill="#14141c" stroke="#8c8c8c" stroke-width="0.9"/>
<path d="M133.4 301L127.10000000000001 310.8L133.4 307.6Z" fill="#a6a6a6"/><path d="M133.70000000000002 301.8L139.0 310L133.70000000000002 307.3Z" fill="#14141c" stroke="#8c8c8c" stroke-width="0.9"/>
<path d="M117.4 393.8L123.7 384L117.4 387.2Z" fill="#a6a6a6"/><path d="M117.10000000000001 393L111.80000000000001 384.8L117.10000000000001 387.5Z" fill="#14141c" stroke="#8c8c8c" stroke-width="0.9"/>
<path d="M141.4 421.8L147.70000000000002 412L141.4 415.2Z" fill="#a6a6a6"/><path d="M141.1 421L135.8 412.8L141.1 415.5Z" fill="#14141c" stroke="#8c8c8c" stroke-width="0.9"/>
<path d="M181.4 319L175.1 328.8L181.4 325.6Z" fill="#a6a6a6"/><path d="M181.70000000000002 319.8L187.0 328L181.70000000000002 325.3Z" fill="#14141c" stroke="#8c8c8c" stroke-width="0.9"/>
<path d="M197.4 400.8L203.70000000000002 391L197.4 394.2Z" fill="#a6a6a6"/><path d="M197.1 400L191.8 391.8L197.1 394.5Z" fill="#14141c" stroke="#8c8c8c" stroke-width="0.9"/>
<path d="M237.4 347.5L231.1 357.3L237.4 354.1Z" fill="#a6a6a6"/><path d="M237.70000000000002 348.3L243.0 356.5L237.70000000000002 353.8Z" fill="#14141c" stroke="#8c8c8c" stroke-width="0.9"/>
<path d="M229.4 403.8L235.70000000000002 394L229.4 397.2Z" fill="#a6a6a6"/><path d="M229.1 403L223.8 394.8L229.1 397.5Z" fill="#14141c" stroke="#8c8c8c" stroke-width="0.9"/>
<path d="M253.4 403.8L259.7 394L253.4 397.2Z" fill="#a6a6a6"/><path d="M253.1 403L247.8 394.8L253.1 397.5Z" fill="#14141c" stroke="#8c8c8c" stroke-width="0.9"/>
<path d="M285.4 348.5L279.09999999999997 358.3L285.4 355.1Z" fill="#a6a6a6"/><path d="M285.7 349.3L291.0 357.5L285.7 354.8Z" fill="#14141c" stroke="#8c8c8c" stroke-width="0.9"/>
<path d="M349.4 303.5L343.09999999999997 313.3L349.4 310.1Z" fill="#a6a6a6"/><path d="M349.7 304.3L355.0 312.5L349.7 309.8Z" fill="#14141c" stroke="#8c8c8c" stroke-width="0.9"/>
<path d="M309.4 486.3L315.7 476.5L309.4 479.7Z" fill="#a6a6a6"/><path d="M309.09999999999997 485.5L303.79999999999995 477.3L309.09999999999997 480.0Z" fill="#14141c" stroke="#8c8c8c" stroke-width="0.9"/>
<path d="M333.4 483.8L339.7 474L333.4 477.2Z" fill="#a6a6a6"/><path d="M333.09999999999997 483L327.79999999999995 474.8L333.09999999999997 477.5Z" fill="#14141c" stroke="#8c8c8c" stroke-width="0.9"/>
<path d="M413.4 362L407.09999999999997 371.8L413.4 368.6Z" fill="#a6a6a6"/><path d="M413.7 362.8L419.0 371L413.7 368.3Z" fill="#14141c" stroke="#8c8c8c" stroke-width="0.9"/>
<path d="M445.4 350.5L439.09999999999997 360.3L445.4 357.1Z" fill="#a6a6a6"/><path d="M445.7 351.3L451.0 359.5L445.7 356.8Z" fill="#14141c" stroke="#8c8c8c" stroke-width="0.9"/>
<path d="M429.4 425.8L435.7 416L429.4 419.2Z" fill="#a6a6a6"/><path d="M429.09999999999997 425L423.79999999999995 416.8L429.09999999999997 419.5Z" fill="#14141c" stroke="#8c8c8c" stroke-width="0.9"/>
<circle cx="21.5" cy="200" r="6.2" fill="#ff00ff"/><circle cx="381.5" cy="355.5" r="6.2" fill="#ff00ff"/>
<circle cx="349.3" cy="449" r="6.2" fill="#00ffff"/><circle cx="453" cy="390.5" r="6.2" fill="#00ffff"/>
</g>
<rect x="13" y="288" width="5" height="5" fill="#00ffff"/><rect x="14" y="289" width="3" height="3" fill="#fff"/>
<rect x="605" y="288" width="5" height="5" fill="#00ffff"/><rect x="606" y="289" width="3" height="3" fill="#fff"/>
<rect x="13" y="314" width="5" height="5" fill="#00ffff"/><rect x="14" y="315" width="3" height="3" fill="#fff"/>
<rect x="605" y="314" width="5" height="5" fill="#00ffff"/><rect x="606" y="315" width="3" height="3" fill="#fff"/>
<rect x="612" y="284" width="36" height="11" fill="#00ffff"/>
<rect x="612" y="310" width="36" height="11" fill="#00ffff"/>
<rect x="612" y="359" width="36" height="11" fill="#fff"/>
<path d="M13 564.5H610" stroke="#5040a8" stroke-width="1" stroke-dasharray="9 3 3 3 3 3"/>
<rect x="13" y="532" width="3" height="32" fill="#ff0000"/>
<rect x="19" y="555" width="5" height="9" fill="#ff0000"/>
<rect x="27" y="565" width="5" height="23" fill="#ff0000"/>
<rect x="35" y="565" width="5" height="44" fill="#ff0000"/>
<rect x="43" y="565" width="5" height="60" fill="#ff0000"/>
<rect x="51" y="565" width="5" height="69" fill="#ff0000"/>
<rect x="59" y="565" width="5" height="76" fill="#ff0000"/>
<rect x="67" y="565" width="5" height="77" fill="#ff0000"/>
<rect x="75" y="565" width="5" height="77" fill="#8000ff"/>
<rect x="83" y="565" width="5" height="77" fill="#ff0000"/>
<rect x="91" y="565" width="5" height="87" fill="#ff0000"/>
<rect x="99" y="565" width="5" height="85" fill="#8000ff"/>
<rect x="107" y="565" width="5" height="106" fill="#ff0000"/>
<rect x="115" y="565" width="5" height="119" fill="#ff0000"/>
<rect x="123" y="565" width="5" height="122" fill="#ff0000"/>
<rect x="131" y="565" width="5" height="125" fill="#ff0000"/>
<rect x="139" y="565" width="5" height="136" fill="#ff0000"/>
<rect x="147" y="565" width="5" height="136" fill="#ff0000"/>
<rect x="155" y="565" width="5" height="141" fill="#ff0000"/>
<rect x="163" y="565" width="5" height="137" fill="#8000ff"/>
<rect x="171" y="565" width="5" height="130" fill="#8000ff"/>
<rect x="179" y="565" width="5" height="125" fill="#8000ff"/>
<rect x="187" y="565" width="5" height="123" fill="#8000ff"/>
<rect x="195" y="565" width="5" height="122" fill="#8000ff"/>
<rect x="203" y="565" width="5" height="117" fill="#8000ff"/>
<rect x="211" y="565" width="5" height="114" fill="#8000ff"/>
<rect x="219" y="565" width="5" height="111" fill="#8000ff"/>
<rect x="227" y="565" width="5" height="109" fill="#8000ff"/>
<rect x="235" y="565" width="5" height="106" fill="#8000ff"/>
<rect x="243" y="565" width="5" height="101" fill="#8000ff"/>
<rect x="251" y="565" width="5" height="97" fill="#8000ff"/>
<rect x="259" y="565" width="5" height="94" fill="#8000ff"/>
<rect x="267" y="565" width="5" height="89" fill="#8000ff"/>
<rect x="275" y="565" width="5" height="85" fill="#8000ff"/>
<rect x="283" y="565" width="5" height="83" fill="#8000ff"/>
<rect x="291" y="565" width="5" height="89" fill="#ff0000"/>
<rect x="299" y="565" width="5" height="99" fill="#ff0000"/>
<rect x="307" y="565" width="5" height="97" fill="#8000ff"/>
<rect x="315" y="565" width="5" height="99" fill="#ff0000"/>
<rect x="323" y="565" width="5" height="99" fill="#ff0000"/>
<rect x="331" y="565" width="5" height="97" fill="#8000ff"/>
<rect x="339" y="565" width="5" height="91" fill="#8000ff"/>
<rect x="347" y="565" width="5" height="71" fill="#8000ff"/>
<rect x="355" y="565" width="5" height="68" fill="#8000ff"/>
<rect x="363" y="565" width="5" height="54" fill="#8000ff"/>
<rect x="371" y="565" width="5" height="48" fill="#8000ff"/>
<rect x="379" y="565" width="5" height="45" fill="#8000ff"/>
<rect x="387" y="565" width="5" height="42" fill="#8000ff"/>
<rect x="395" y="565" width="5" height="35" fill="#8000ff"/>
<rect x="403" y="565" width="5" height="30" fill="#8000ff"/>
<rect x="411" y="565" width="5" height="26" fill="#8000ff"/>
<rect x="419" y="565" width="5" height="25" fill="#8000ff"/>
<rect x="427" y="565" width="5" height="20" fill="#8000ff"/>
<rect x="435" y="565" width="5" height="18" fill="#8000ff"/>
<rect x="443" y="565" width="5" height="14" fill="#8000ff"/>
<rect x="451" y="565" width="5" height="9" fill="#8000ff"/>
<rect x="459" y="565" width="5" height="6" fill="#8000ff"/>
<rect x="467" y="558" width="5" height="6" fill="#8000ff"/>
<rect x="475" y="556" width="5" height="8" fill="#8000ff"/>
<polyline points="13.6,519 22,525.25 31.8,535 38.9,546 45.5,553.5 53,565.5 60,577.5 66.9,589.8 76.7,605.2 86.6,620.6 97.8,634.7 110.4,645.9 123,655.3 137,665.5 151,677 162,685.5 172.5,692 180,694.25 190,695.5 200,695.5 207.5,693 217.5,689.5 227.5,685.75 237.5,681.75 247.5,677.5 257.5,673.75 267.5,669.5 277.5,665.75 287.5,661.25 297.5,658.75 307.5,657.5 317.5,656.5 332.5,657.5 345,657 352.5,655.5 365,650 377.5,643 387.5,635 397.5,625 407.5,616.25 417.5,607.5 427.5,601.25 437.5,596.25 447.5,591.25 457.5,586.25 467.5,581.25 476.25,576.75" fill="none" stroke="#3ad43a" stroke-width="1.150" stroke-dasharray="10 3.300 3.300 3.300 3.300 3.300" shape-rendering="crispEdges"/>
<g font-family="Liberation Sans, sans-serif" font-size="9.5px" fill="#fff" shape-rendering="auto" text-rendering="geometricPrecision">
<text x="616.5" y="131" textLength="27.8" lengthAdjust="spacingAndGlyphs">1.3885</text>
<text x="616.5" y="167" textLength="27.8" lengthAdjust="spacingAndGlyphs">1.3875</text>
<text x="616.5" y="203" textLength="27.8" lengthAdjust="spacingAndGlyphs">1.3865</text>
<text x="616.5" y="239" textLength="27.8" lengthAdjust="spacingAndGlyphs">1.3855</text>
<text x="616.5" y="275" textLength="27.8" lengthAdjust="spacingAndGlyphs">1.3845</text>
<text x="616.5" y="311" textLength="27.8" lengthAdjust="spacingAndGlyphs">1.3835</text>
<text x="616.5" y="347" textLength="27.8" lengthAdjust="spacingAndGlyphs">1.3825</text>
<text x="616.5" y="383" textLength="27.8" lengthAdjust="spacingAndGlyphs">1.3815</text>
<text x="616.5" y="419" textLength="27.8" lengthAdjust="spacingAndGlyphs">1.3805</text>
<text x="616.5" y="455" textLength="27.8" lengthAdjust="spacingAndGlyphs">1.3795</text>
<text x="616.5" y="491" textLength="27.8" lengthAdjust="spacingAndGlyphs">1.3785</text>
<text x="616.5" y="292.7" fill="#000" textLength="27.8" lengthAdjust="spacingAndGlyphs">1.3840</text>
<text x="616.5" y="318.7" fill="#000" textLength="27.8" lengthAdjust="spacingAndGlyphs">1.3833</text>
<text x="616.5" y="367.7" fill="#000" textLength="27.8" lengthAdjust="spacingAndGlyphs">1.3819</text>
<text x="614.5" y="519.2" textLength="32.3" lengthAdjust="spacingAndGlyphs">0.00056</text><text x="614.5" y="567" textLength="17.5" lengthAdjust="spacingAndGlyphs">0.00</text><text x="614" y="712.3" textLength="35.5" lengthAdjust="spacingAndGlyphs">-0.00157</text>
<text x="27.9" y="119.6" textLength="54.3" lengthAdjust="spacingAndGlyphs">EURUSD,H1</text>
<text x="88.9" y="119.6" textLength="27.8" lengthAdjust="spacingAndGlyphs">1.3827</text>
<text x="119.6" y="119.6" textLength="27.8" lengthAdjust="spacingAndGlyphs">1.3830</text>
<text x="150.3" y="119.6" textLength="27.8" lengthAdjust="spacingAndGlyphs">1.3817</text>
<text x="181.3" y="119.6" textLength="27.8" lengthAdjust="spacingAndGlyphs">1.3819</text>
<path d="M16 115H23L19.5 119.300Z" fill="#fff" shape-rendering="auto"/>
<text x="17.8" y="520.8" textLength="66.2" lengthAdjust="spacingAndGlyphs">MACD(12,26,9)</text>
<text x="86.5" y="520.8" textLength="32.3" lengthAdjust="spacingAndGlyphs">0.00008</text>
<text x="122.1" y="520.8" textLength="32.3" lengthAdjust="spacingAndGlyphs">0.00000</text>
<text x="157.7" y="520.8" textLength="32.3" lengthAdjust="spacingAndGlyphs">0.00000</text>
<text x="193.8" y="520.8" textLength="36.2" lengthAdjust="spacingAndGlyphs">-0.00012</text>
<text x="233.7" y="520.8" textLength="32.6" lengthAdjust="spacingAndGlyphs">0.00000</text>
<text x="12.8" y="728" textLength="51" lengthAdjust="spacingAndGlyphs">11 Apr 2014</text>
<text x="76.3" y="728" textLength="53.4" lengthAdjust="spacingAndGlyphs">14 Apr 07:00</text>
<text x="140.3" y="728" textLength="53.4" lengthAdjust="spacingAndGlyphs">14 Apr 15:00</text>
<text x="204.3" y="728" textLength="53.4" lengthAdjust="spacingAndGlyphs">14 Apr 23:00</text>
<text x="268.3" y="728" textLength="53.4" lengthAdjust="spacingAndGlyphs">15 Apr 07:00</text>
<text x="332.3" y="728" textLength="53.4" lengthAdjust="spacingAndGlyphs">15 Apr 15:00</text>
<text x="396.3" y="728" textLength="53.4" lengthAdjust="spacingAndGlyphs">15 Apr 23:00</text>
<text x="460.3" y="728" textLength="53.4" lengthAdjust="spacingAndGlyphs">16 Apr 07:00</text>
</g>
</svg>
<div id="tabs">
<div class="abs" style="left:0;top:0;width:644px;height:2px;background:#f8f8f8"></div>
<div class="abs" style="left:1px;top:2px;width:80px;height:1px;background:#000"></div>
<div class="abs" style="left:159px;top:2px;width:485px;height:1px;background:#000"></div>
<div class="abs" style="left:1px;top:3px;width:1px;height:17px;background:#fff"></div>
<div class="abs" style="left:80px;top:0px;width:80px;height:20px;background:#fff;border:1px solid #000;border-top:none;border-bottom-width:1px"></div>
<span class="abs tx" style="left:14px;top:6px;font-size:10.300px;color:#6e6e6e;white-space:nowrap">EURJPY,H1</span>
<span class="abs tx" style="left:90px;top:6px;font-size:10.300px;letter-spacing:-0.1px;color:#000;white-space:nowrap">EURUSD,H1</span>
<svg class="abs" style="left:612px;top:7px" width="30" height="10" viewBox="0 0 30 10"><path d="M7 1.500v7l-4-3.500zM24 1.500v7l4-3.500z" fill="#9c9c9c"/></svg>
</div>
<div id="status">
<div class="abs" style="left:0;top:0;width:644px;height:1px;background:#dcdcdc"></div>
<span class="abs tx" style="left:2.500px;top:4px;font-size:12px;letter-spacing:-0.45px;color:#000;white-space:nowrap">Defau</span>
<div class="abs" style="left:34px;top:3px;width:1px;height:11px;background:#a0a0a0"></div>
<div class="abs" style="left:137px;top:3px;width:1px;height:11px;background:#a0a0a0"></div>
<div class="abs" style="left:207px;top:3px;width:1px;height:11px;background:#a0a0a0"></div>
<div class="abs" style="left:278px;top:3px;width:1px;height:11px;background:#a0a0a0"></div>
<div class="abs" style="left:346px;top:3px;width:1px;height:11px;background:#a0a0a0"></div>
<div class="abs" style="left:416px;top:3px;width:1px;height:11px;background:#a0a0a0"></div>
<div class="abs" style="left:485px;top:3px;width:1px;height:11px;background:#a0a0a0"></div>
<svg class="abs" style="left:487px;top:4px" width="28" height="10" viewBox="0 0 28 10" shape-rendering="crispEdges"><path d="M3 1v9M5.500 1v9M8 1v9M10.500 1v9" stroke="#6b8e23" stroke-width="2"/><path d="M13 1v9M15.500 2v8M18 3v7" stroke="#3a5a2a" stroke-width="1.500"/><path d="M20.500 3v7M23 4v6" stroke="#1f3f7a" stroke-width="1.500"/></svg>
<span class="abs tx" style="left:548.500px;top:3px;font-size:11.500px;letter-spacing:-0.3px;color:#000;white-space:nowrap">355/2 kb</span>
<svg class="abs" style="left:630px;top:2px" width="13" height="13" viewBox="0 0 13 13"><path d="M12 2L2 12M12 6L6 12M12 10l-2 2" stroke="#a0a0a0" stroke-width="1"/><path d="M12 3L3 12M12 7l-5 5M12 11l-1 1" stroke="#fff" stroke-width="1"/></svg>
</div>

</div>
<div id="taskbar">
<div class="abs" style="left:0;top:0;width:660px;height:1px;background:#0c0c0c"></div>
<div class="abs" style="left:0;top:1px;width:61px;height:13px;background:linear-gradient(#747474,#5a5a5a 3px,#3e3e3e);border-right:1px solid #808080;border-top:1px solid #8c8c8c;border-radius:0 2px 0 0"></div>
<div class="abs" style="left:65px;top:1px;width:158px;height:13px;background:linear-gradient(#d0d0d0,#b4b4b4 3px,#9a9a9a);border:1px solid #dedede;border-bottom:none;border-radius:2px 2px 0 0"></div>
<div class="abs" style="left:75px;top:6px;width:15px;height:8px;background:#2a6a9c;border:1.500px solid #e8f0f8;border-bottom:none;border-radius:1px 1px 0 0"></div>
<div class="abs" style="left:79px;top:10px;width:8px;height:4px;border:1.500px solid #fff;border-bottom:none;"></div>
<span class="abs tx" style="left:94px;top:8px;font-size:12px;letter-spacing:-0.3px;color:#f4f4f4;white-space:nowrap;text-shadow:0 0 2px #555">3014953: MetaTrader</span>
<span class="abs tx" style="left:2px;top:7.500px;font-size:12px;color:#fff;white-space:nowrap">исцис</span>
<span class="abs tx" style="left:477px;top:6px;font-size:12px;letter-spacing:-0.5px;color:#fff;white-space:nowrap">EN</span>
<svg class="abs" style="left:497px;top:6px" width="20" height="9" viewBox="0 0 20 9"><path d="M3 9l2-4h12l2 4z" fill="#ddd"/><path d="M6 4q5-4 10-2" stroke="#ccc" fill="none"/></svg>
<div class="abs" style="left:547px;top:8px;width:7px;height:6px;background:#e8e8e8"></div>
<span class="abs tx" style="left:594px;top:9.500px;font-size:12px;letter-spacing:-0.4px;color:#fff;white-space:nowrap">00:50</span>
<div class="abs" style="left:648px;top:1px;width:12px;height:13px;background:linear-gradient(90deg,#8a8a8a,#5a5a5a);border-left:1px solid #b0b0b0"></div>
</div>

<svg class="abs" style="left:0;top:0;pointer-events:none" width="660" height="52" viewBox="0 0 660 52" font-family="Liberation Sans, sans-serif" fill="#000">
<g font-size="12.500px" lengthAdjust="spacingAndGlyphs">
<text x="29" y="19.500" textLength="48.500" lengthAdjust="spacingAndGlyphs">3014953:</text>
<text x="80.700" y="19.500" textLength="61.500" lengthAdjust="spacingAndGlyphs">MetaTrader</text>
<text x="145.200" y="19.500" textLength="6.900" lengthAdjust="spacingAndGlyphs">4</text>
<text x="155.900" y="19.500">-</text>
<text x="163.900" y="19.500" textLength="57.500" lengthAdjust="spacingAndGlyphs">RoboForex</text>
<text x="224.800" y="19.500">-</text>
<text x="233.200" y="19.500" textLength="68.800" lengthAdjust="spacingAndGlyphs">[EURUSD,H1]</text>
</g>
<g font-size="12.500px">
<text x="36.300" y="44" textLength="29" lengthAdjust="spacingAndGlyphs">Файл</text>
<text x="83.200" y="44" textLength="19.300" lengthAdjust="spacingAndGlyphs">Вид</text>
<text x="120.200" y="44" textLength="41.300" lengthAdjust="spacingAndGlyphs">Вставка</text>
<text x="180" y="44" textLength="43.800" lengthAdjust="spacingAndGlyphs">Графики</text>
<text x="241.500" y="44" textLength="37.700" lengthAdjust="spacingAndGlyphs">Сервис</text>
<text x="296" y="44" textLength="26.800" lengthAdjust="spacingAndGlyphs">Окно</text>
<text x="340.200" y="44" textLength="43.500" lengthAdjust="spacingAndGlyphs">Справка</text>
</g>
</svg>

</body></html>
